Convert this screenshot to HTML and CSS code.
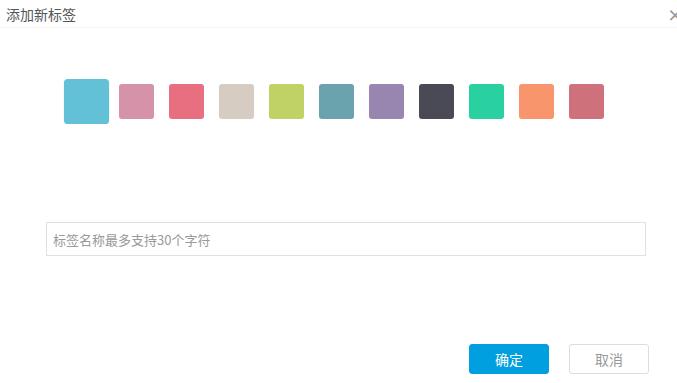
FILE: index.html
```html
<!DOCTYPE html>
<html lang="zh-CN">
<head>
    <meta charset="UTF-8">
    <meta name="viewport" content="width=device-width, initial-scale=1.0">
    <title>添加新标签</title>
    <link rel="stylesheet" href="styles.css">
</head>
<body>
    <div class="dialog">
        <div class="dialog-head">
            <span class="title">添加新标签</span>
            <span class="close">×</span>
        </div>
        <!-- 颜色选择 -->
        <div class="colors">
            <span class="color active" style="background: #63c1d7"></span>
            <span class="color" style="background: #d592a9"></span>
            <span class="color" style="background: #e86f7f"></span>
            <span class="color" style="background: #d6ccc2"></span>
            <span class="color" style="background: #c0d166"></span>
            <span class="color" style="background: #6aa3ad"></span>
            <span class="color" style="background: #9886b0"></span>
            <span class="color" style="background: #4a4956"></span>
            <span class="color" style="background: #29d1a1"></span>
            <span class="color" style="background: #f8956d"></span>
            <span class="color" style="background: #cf717b"></span>
        </div>
        <div class="field">
            <input class="tag-name" type="text" placeholder="标签名称最多支持30个字符">
        </div>
        <div class="actions">
            <button class="btn btn-ok">确定</button>
            <button class="btn btn-cancel">取消</button>
        </div>
    </div>
</body>
</html>
```

FILE: styles.css
```css
* {
    margin: 0;
    padding: 0;
    box-sizing: border-box;
}
body, html {
    font-family: "Noto Sans CJK SC", "Liberation Sans", sans-serif;
    background: #fff;
    overflow: hidden;
}
.dialog {
    width: 677px;
    height: 383px;
}
/* 标题栏 */
.dialog-head {
    display: flex;
    justify-content: space-between;
    align-items: center;
    height: 28px;
    padding-left: 6px;
    border-bottom: 1px solid #f3f3f3;
}
.title {
    font-size: 14px;
    color: #555;
}
.close {
    font-size: 16px;
    font-weight: bold;
    color: #999;
    margin-right: -6px;
}
/* 颜色块 */
.colors {
    display: flex;
    gap: 15px;
    padding: 56px 0 0 69px;
}
.color {
    display: block;
    width: 35px;
    height: 35px;
    border-radius: 3px;
}
.color.active {
    transform: scale(1.29);
}
.field {
    padding: 103px 0 0 46px;
}
.tag-name {
    display: block;
    width: 600px;
    height: 34px;
    border: 1px solid #e0e0e0;
    padding: 0 6px;
    font-family: inherit;
    font-size: 13px;
    color: #333;
    outline: none;
}
.tag-name::placeholder {
    color: #999;
}
/* 按钮 */
.actions {
    display: flex;
    justify-content: flex-end;
    gap: 20px;
    padding: 88px 28px 0 0;
}
.btn {
    width: 80px;
    height: 30px;
    border-radius: 3px;
    font-family: inherit;
    font-size: 14px;
    cursor: pointer;
}
.btn-ok {
    background: #00a0e0;
    border: 1px solid #00a0e0;
    color: #fff;
}
.btn-cancel {
    background: #fff;
    border: 1px solid #ddd;
    color: #999;
}
```
